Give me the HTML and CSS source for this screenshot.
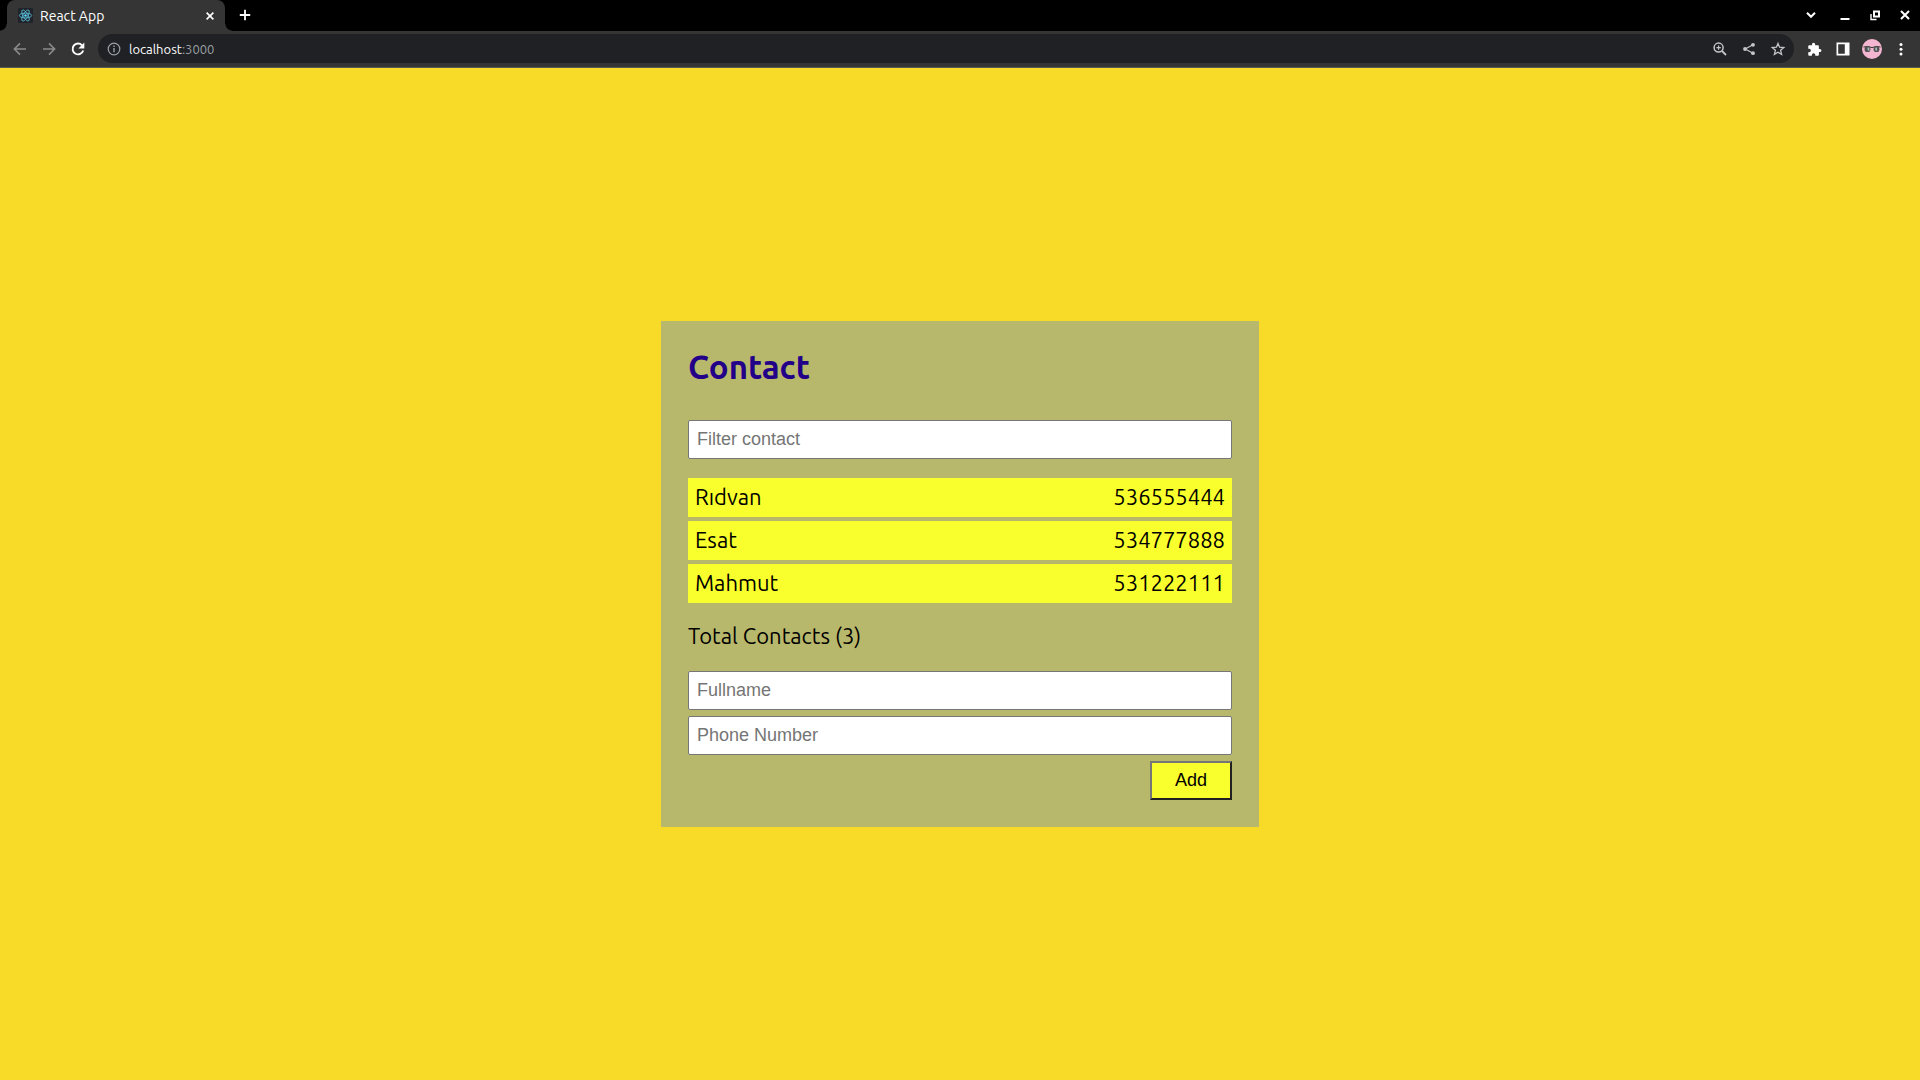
FILE: index.html
```html
<!DOCTYPE html>
<html lang="en">
<head>
<meta charset="utf-8">
<title>React App</title>
<link rel="stylesheet" href="styles.css">
</head>
<body>
<header class="browser">
  <div class="tabstrip">
    <div class="tab">
      <svg class="favicon" viewBox="0 0 16 16" aria-hidden="true">
        <rect width="16" height="16" rx="1" fill="#20232a"/>
        <g fill="none" stroke="#61dafb" stroke-width=".9" opacity=".85">
          <ellipse cx="8" cy="8" rx="6.6" ry="2.6"/>
          <ellipse cx="8" cy="8" rx="6.6" ry="2.6" transform="rotate(60 8 8)"/>
          <ellipse cx="8" cy="8" rx="6.6" ry="2.6" transform="rotate(120 8 8)"/>
        </g>
        <circle cx="8" cy="8" r="1.3" fill="#61dafb"/>
      </svg>
      <span class="tab-title">React App</span>
      <button class="tab-close" aria-label="Close tab"><svg class="icon" viewBox="0 0 16 16"><path d="M4.6 4.6l6.8 6.8M11.4 4.6l-6.8 6.8" stroke="currentColor" stroke-width="1.6"/></svg></button>
    </div>
    <button class="new-tab" aria-label="New tab"><svg class="icon" viewBox="0 0 16 16"><path d="M8 2.8v10.4M2.8 8h10.4" stroke="currentColor" stroke-width="1.8"/></svg></button>
    <div class="window-controls">
      <button class="tab-search" aria-label="Search tabs"><svg class="icon" viewBox="0 0 16 16"><path d="M4 5.8l4 4 4-4" fill="none" stroke="currentColor" stroke-width="2"/></svg></button>
      <button class="window-button" aria-label="Minimize"><svg class="icon" viewBox="0 0 16 16"><path d="M3.5 12h9" stroke="currentColor" stroke-width="2"/></svg></button>
      <button class="window-button" aria-label="Restore"><svg class="icon" viewBox="0 0 16 16"><path d="M7 4.5h5v5H7z" fill="none" stroke="currentColor" stroke-width="2"/><path d="M4 7v5.500h5.500" fill="none" stroke="currentColor" stroke-width="1.4"/></svg></button>
      <button class="window-button" aria-label="Close"><svg class="icon" viewBox="0 0 16 16"><path d="M4 4l8 8M12 4l-8 8" stroke="currentColor" stroke-width="2"/></svg></button>
    </div>
  </div>
  <div class="toolbar">
    <button class="tool muted" aria-label="Back"><svg class="icon" viewBox="0 0 16 16"><path d="M14 8H2.8M8 2.4L2.4 8 8 13.6" fill="none" stroke="currentColor" stroke-width="1.6"/></svg></button>
    <button class="tool muted" aria-label="Forward"><svg class="icon" viewBox="0 0 16 16"><path d="M2 8h11.2M8 2.4L13.6 8 8 13.6" fill="none" stroke="currentColor" stroke-width="1.6"/></svg></button>
    <button class="tool" aria-label="Reload"><svg class="icon" viewBox="0 0 16 16"><path d="M13.2 9.5A5.4 5.4 0 1 1 12 4.3" fill="none" stroke="currentColor" stroke-width="1.9"/><path d="M14.3 1.6v6H8.4z" fill="currentColor"/></svg></button>
    <div class="omnibox">
      <svg class="icon info" viewBox="0 0 16 16" aria-hidden="true"><circle cx="8" cy="8" r="5.8" fill="none" stroke="currentColor" stroke-width="1.2"/><path d="M8 7v4.2M8 4.6v1.5" stroke="currentColor" stroke-width="1.4"/></svg>
      <div class="address">localhost<span class="port">:3000</span></div>
      <button class="tool soft" aria-label="Zoom"><svg class="icon" viewBox="0 0 16 16"><circle cx="6.6" cy="6.6" r="4.5" fill="none" stroke="currentColor" stroke-width="1.5"/><path d="M10 10l4 4" stroke="currentColor" stroke-width="1.8"/><path d="M6.6 4.4v4.4M4.4 6.6h4.4" stroke="currentColor" stroke-width="1.2"/></svg></button>
      <button class="tool soft" aria-label="Share"><svg class="icon" viewBox="0 0 16 16"><path d="M12 3.8L4.2 8l7.8 4.2" fill="none" stroke="currentColor" stroke-width="1.2"/><g fill="currentColor"><circle cx="12" cy="3.8" r="1.9"/><circle cx="4" cy="8" r="1.9"/><circle cx="12" cy="12.2" r="1.9"/></g></svg></button>
      <button class="tool soft" aria-label="Bookmark this tab"><svg class="icon" viewBox="0 0 16 16"><path d="M8 2.4l1.6 3.8 4.2.4-3.2 2.7 1 4.1L8 11.2l-3.6 2.2 1-4.1-3.2-2.7 4.2-.4z" fill="none" stroke="currentColor" stroke-width="1.3"/></svg></button>
    </div>
    <button class="tool" aria-label="Extensions"><svg class="icon" viewBox="0 0 24 24"><path transform="translate(1.5 1.5) scale(.94)" d="M20.5 11H19V7c0-1.1-.9-2-2-2h-4V3.5a2.5 2.5 0 0 0-5 0V5H4c-1.1 0-2 .9-2 2v3.8h1.5a2.7 2.7 0 0 1 0 5.4H2V20c0 1.1.9 2 2 2h3.8v-1.5a2.7 2.7 0 0 1 5.4 0V22H17c1.1 0 2-.9 2-2v-4h1.5a2.5 2.5 0 0 0 0-5z" fill="currentColor"/></svg></button>
    <button class="tool" aria-label="Side panel"><svg class="icon" viewBox="0 0 16 16"><path fill-rule="evenodd" d="M1.500 1.500h13v13h-13zM3.200 3.200v9.600h6.600V3.200z" fill="currentColor"/></svg></button>
    <button class="tool" aria-label="Profile"><svg class="avatar" viewBox="0 0 20 20"><circle cx="10" cy="10" r="10" fill="#f4b5d0"/><path d="M1.500 8Q5.500 6.600 10 8.600q4.500-2 8.500-.6" fill="none" stroke="#333" stroke-width="1"/><circle cx="5.500" cy="10.200" r="2.900" fill="#4e5252"/><circle cx="14.500" cy="10.200" r="2.900" fill="#4e5252"/><path d="M6.300 8.600l.4 3M14 8.600l.4 3" stroke="#aab6b2" stroke-width="1.800"/></svg></button>
    <button class="tool" aria-label="Menu"><svg class="icon" viewBox="0 0 16 16"><g fill="currentColor"><circle cx="8" cy="3.5" r="1.5"/><circle cx="8" cy="8.300" r="1.5"/><circle cx="8" cy="13" r="1.5"/></g></svg></button>
  </div>
</header>
<main class="page">
  <section class="card">
    <h1 class="title">Contact</h1>
    <input class="field" type="text" placeholder="Filter contact" aria-label="Filter contact">
    <ul class="list">
      <li class="contact"><span>Rıdvan</span><span>536555444</span></li>
      <li class="contact"><span>Esat</span><span>534777888</span></li>
      <li class="contact"><span>Mahmut</span><span>531222111</span></li>
    </ul>
    <p class="total">Total Contacts (3)</p>
    <form class="form">
      <input class="field" type="text" placeholder="Fullname" aria-label="Fullname">
      <input class="field" type="text" placeholder="Phone Number" aria-label="Phone Number">
      <button class="add" type="submit">Add</button>
    </form>
  </section>
</main>
</body>
</html>
```
FILE: styles.css
```css
* { box-sizing: border-box; }

body {
  margin: 0;
  min-height: 100vh;
  display: flex;
  flex-direction: column;
  background: #f8db29;
  color: #000;
  font-family: "Ubuntu", "Noto Sans", sans-serif;
}

button { font: inherit; }

/* Browser frame */
.browser {
  color: #fff;
  border-bottom: 1px solid #5b5a55;
}

.browser button {
  display: flex;
  align-items: center;
  justify-content: center;
  padding: 0;
  border: 0;
  background: none;
  color: inherit;
}

.icon { display: block; width: 16px; height: 16px; flex: none; }

.tabstrip {
  display: flex;
  height: 31px;
  padding-left: 7px;
  background: #000;
}

.tab {
  position: relative;
  display: flex;
  align-items: center;
  width: 218px;
  padding: 0 7px 0 11px;
  border-radius: 8px 8px 0 0;
  background: #353535;
}

/* Curved feet where the tab meets the toolbar */
.tab::before,
.tab::after {
  content: "";
  position: absolute;
  bottom: 0;
  width: 7px;
  height: 7px;
}

.tab::before {
  right: 100%;
  background: radial-gradient(circle at 0 0, transparent 6px, #353535 7px);
}

.tab::after {
  left: 100%;
  background: radial-gradient(circle at 100% 0, transparent 6px, #353535 7px);
}

.favicon { width: 15px; height: 15px; margin-right: 7px; }
.tab-title { flex: 1; font-size: 14px; line-height: 20px; }
.new-tab { width: 39px; height: 30px; }
.window-controls { display: flex; height: 30px; margin-left: auto; }
.tab-search { width: 38px; }
.window-button { width: 30px; }

.toolbar {
  display: flex;
  align-items: center;
  height: 36px;
  padding: 0 5px 1px;
  background: #353535;
}

.tool { width: 29px; height: 29px; flex: none; }
.browser .muted { color: #8b8b8b; }
.browser .soft { color: #c4c5c7; }
.avatar { width: 20px; height: 20px; }

.omnibox {
  display: flex;
  align-items: center;
  flex: 1;
  height: 29px;
  margin: 0 5px 0 6px;
  padding: 0 2px 0 8px;
  border-radius: 15px;
  background: #202124;
}

.info { color: #9aa0a6; margin-right: 7px; }
.address { flex: 1; font-size: 13px; line-height: 16px; }
.port { color: #9aa0a6; }

/* Contact app */
.page {
  flex: 1;
  display: flex;
  align-items: center;
  justify-content: center;
}

.card {
  width: 598px;
  max-width: 100%;
  padding: 27px;
  background: #b8b86c;
}

.title {
  margin: 0 0 34px;
  color: #220088;
  font-size: 33px;
  line-height: 38px;
}

.field {
  display: block;
  width: 100%;
  height: 39px;
  padding: 0 8px;
  border: 1px solid #767676;
  border-radius: 2px;
  background: #fff;
  font: 18px "Liberation Sans", Arial, sans-serif;
}

.field::placeholder { color: #757575; }

.list {
  display: grid;
  gap: 4px;
  margin: 19px 0;
  padding: 0;
  list-style: none;
}

.contact {
  display: flex;
  justify-content: space-between;
  height: 39px;
  padding: 0 7px;
  background: #f9ff2c;
  line-height: 38px;
}

.contact, .total { font-size: 22px; }

.total { margin: 0 0 22px; line-height: 27px; }

.form { display: flex; flex-direction: column; gap: 6px; }

.add {
  align-self: flex-end;
  width: 82px;
  height: 39px;
  padding: 0;
  border: 2px solid #767676;
  border-color: #767676 #212121 #212121 #767676;
  background: #f9ff2c;
  color: #000;
}

.form .add { font: 18px "Liberation Sans", Arial, sans-serif; }
```
